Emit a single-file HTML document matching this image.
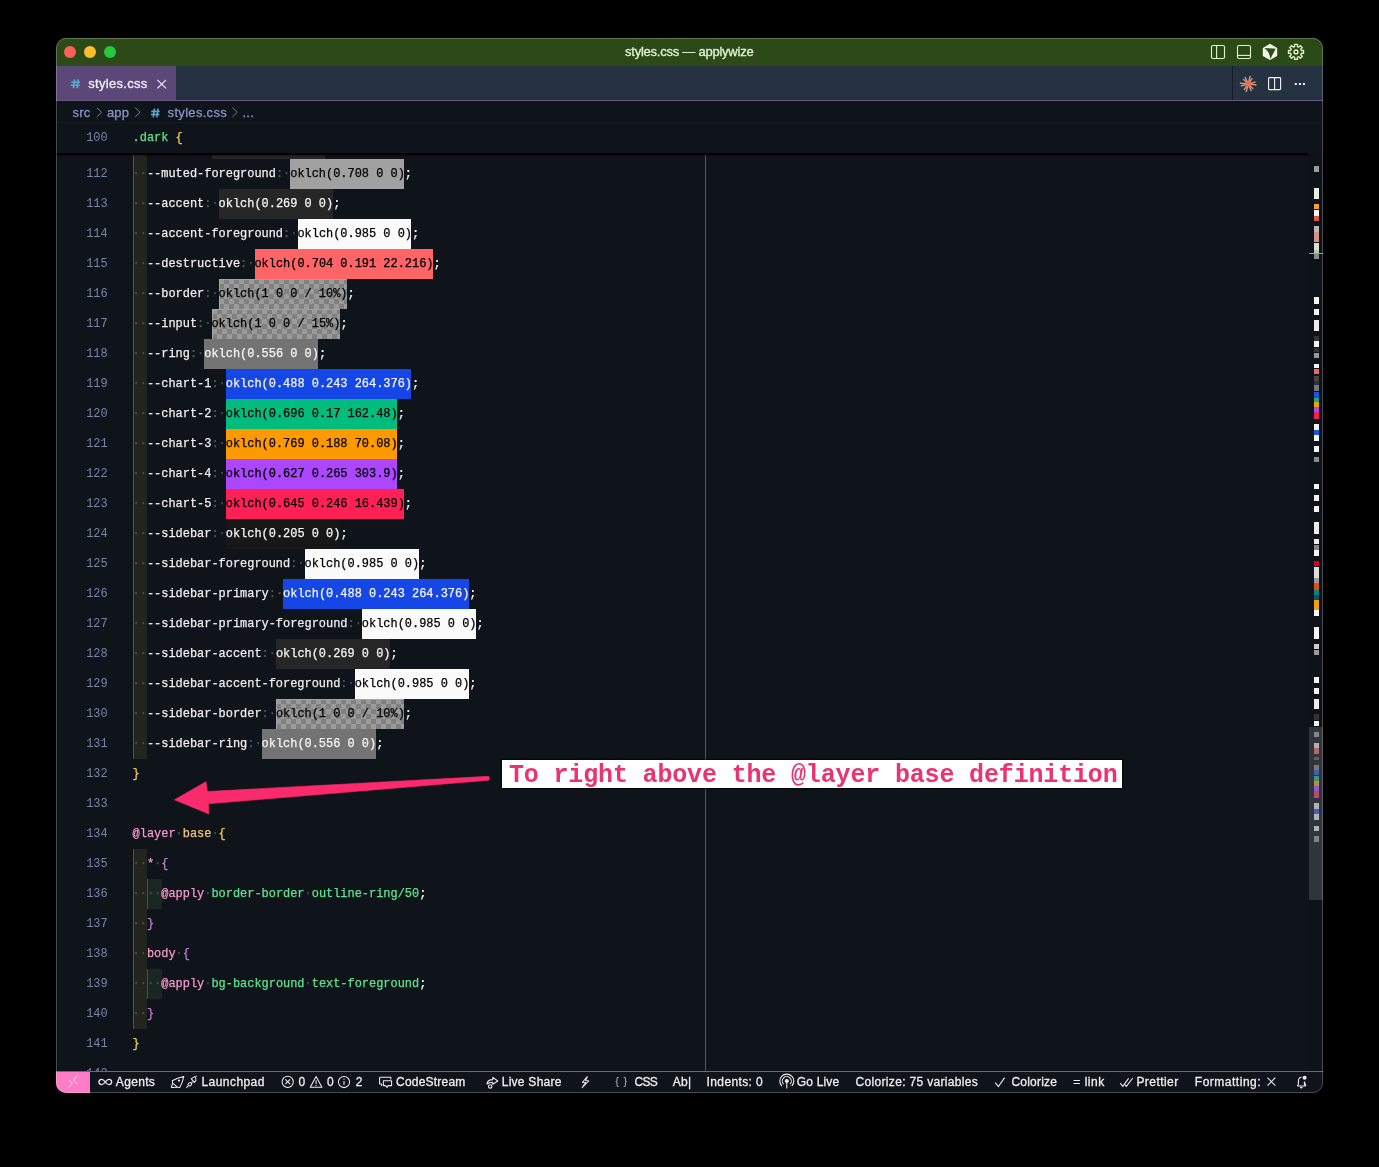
<!DOCTYPE html>
<html><head><meta charset="utf-8">
<style>
html,body{margin:0;padding:0;background:#000;width:1379px;height:1167px;overflow:hidden;position:relative}
#win,#ov,#anntext{will-change:transform}
*{box-sizing:border-box}
#win{position:absolute;left:56px;top:38px;width:1267px;height:1055px;border-radius:10px;overflow:hidden;background:#0f131a}
#frame{position:absolute;left:56px;top:38px;width:1267px;height:1055px;border-radius:10px;border:1px solid rgba(255,255,255,0.24);pointer-events:none}
#title{position:absolute;left:0;top:0;width:1267px;height:28px;background:#2c4a18;border-top:1px solid #2c4a18}
.tl{position:absolute;top:8px;width:12px;height:12px;border-radius:50%}
#tabs{position:absolute;left:0;top:28px;width:1267px;height:35px;background:#243242;border-bottom:1px solid #625880}
#tab{position:absolute;left:0;top:0;width:120px;height:34px;background:#5c4878}
#crumb{position:absolute;left:0;top:63px;width:1267px;height:21px;background:#0f131a}
#editor{position:absolute;left:0;top:84px;width:1267px;height:949px;background:#0f131a;overflow:hidden}
#status{position:absolute;left:0;top:1033px;width:1267px;height:22px;background:#0f131a;border-top:1px solid #5d6d8c}
#remote{position:absolute;left:0;top:0;width:34px;height:21px;background:#fc7cc6}
.ln{position:absolute;left:0;width:51.7px;text-align:right;font:11.943px "Liberation Mono",monospace;color:#7b82a8;height:30px;line-height:30px}
.code{position:absolute;left:76.6px;white-space:pre;font:11.943px "Liberation Mono",monospace;color:#e8e8e8;height:30px;line-height:30px;-webkit-text-stroke:0.25px currentColor}
.sw{position:absolute;height:30px}
.chk{background:repeating-conic-gradient(#808080 0 25%,#9a9a9a 0 50%) 0 0/10px 10px;box-shadow:inset 1px 1px 0 #a4a4a4}
.g1{position:absolute;width:14px;background:#20251e;border-left:1px solid #4e5550}
.g2{position:absolute;width:15px;background:#1a2622;border-left:1px solid #475246}
#sticky{position:absolute;left:0;top:0;width:1252px;height:31px;background:#0f131a;border-top:1px solid #161a20}
#sshadow{position:absolute;left:0;top:31px;width:1252px;height:4px;background:linear-gradient(#000 0,#000 35%,rgba(0,0,0,0.35) 60%,rgba(0,0,0,0))}
#ruler{position:absolute;left:649px;top:0;width:1px;height:949px;background:#545960}
#sbar{position:absolute;left:1252px;top:31px;width:15px;height:918px;background:#0f1319}
#slider{position:absolute;left:1253px;top:605px;width:14px;height:173px;background:rgba(120,125,130,0.32)}
.om{position:absolute;left:1258px;width:5px}
.uit{position:absolute;white-space:pre;font-family:"Liberation Sans",sans-serif;-webkit-text-stroke:0.3px currentColor}
#ov{position:absolute;left:0;top:0;width:1379px;height:1167px}
</style></head><body>
<div id="win">
  <div id="title">
    <div class="tl" style="left:8px;top:7px;background:#fe5f57"></div>
    <div class="tl" style="left:28px;top:7px;background:#febc2e"></div>
    <div class="tl" style="left:48px;top:7px;background:#28c840"></div>
  </div>
  <div id="tabs">
    <div id="tab"></div>
  </div>
  <div id="crumb"></div>
  <div id="editor">
    <div id="ein" style="position:absolute;left:0;top:-84px;width:1267px;height:1055px">
<div class="g1" style="left:77px;top:91px;height:630px"></div>
<div class="g1" style="left:77px;top:811px;height:180px"></div>
<div class="g2" style="left:91px;top:841px;height:30px"></div>
<div class="g2" style="left:91px;top:931px;height:30px"></div>
<div class="ln" style="top:91px">111</div>
<div class="sw" style="left:155.63px;top:91px;width:113.87px;background:#262626"></div>
<div class="code" style="top:91px"><span style="color:#4a5049">··</span><span style="color:#eeeeee">--muted</span><span style="color:#525862">:</span><span style="color:#4a5049">·</span><span style="color:#f4f4f4">oklch(0.269 0 0)</span><span style="color:#eeeeee">;</span></div>
<div class="ln" style="top:121px">112</div>
<div class="sw" style="left:234.47px;top:121px;width:113.87px;background:#a1a1a1"></div>
<div class="code" style="top:121px"><span style="color:#4a5049">··</span><span style="color:#eeeeee">--muted-foreground</span><span style="color:#525862">:</span><span style="color:#4a5049">·</span><span style="color:#000">oklch(0.708 0 0)</span><span style="color:#eeeeee">;</span></div>
<div class="ln" style="top:151px">113</div>
<div class="sw" style="left:162.80px;top:151px;width:113.87px;background:#262626"></div>
<div class="code" style="top:151px"><span style="color:#4a5049">··</span><span style="color:#eeeeee">--accent</span><span style="color:#525862">:</span><span style="color:#4a5049">·</span><span style="color:#f4f4f4">oklch(0.269 0 0)</span><span style="color:#eeeeee">;</span></div>
<div class="ln" style="top:181px">114</div>
<div class="sw" style="left:241.63px;top:181px;width:113.87px;background:#fafafa"></div>
<div class="code" style="top:181px"><span style="color:#4a5049">··</span><span style="color:#eeeeee">--accent-foreground</span><span style="color:#525862">:</span><span style="color:#4a5049">·</span><span style="color:#000">oklch(0.985 0 0)</span><span style="color:#eeeeee">;</span></div>
<div class="ln" style="top:211px">115</div>
<div class="sw" style="left:198.63px;top:211px;width:178.37px;background:#ff6467"></div>
<div class="code" style="top:211px"><span style="color:#4a5049">··</span><span style="color:#eeeeee">--destructive</span><span style="color:#525862">:</span><span style="color:#4a5049">·</span><span style="color:#000">oklch(0.704 0.191 22.216)</span><span style="color:#eeeeee">;</span></div>
<div class="ln" style="top:241px">116</div>
<div class="sw chk" style="left:162.80px;top:241px;width:128.20px"></div>
<div class="code" style="top:241px"><span style="color:#4a5049">··</span><span style="color:#eeeeee">--border</span><span style="color:#525862">:</span><span style="color:#4a5049">·</span><span style="color:#000">oklch(1 0 0 / 10%)</span><span style="color:#eeeeee">;</span></div>
<div class="ln" style="top:271px">117</div>
<div class="sw chk" style="left:155.63px;top:271px;width:128.20px"></div>
<div class="code" style="top:271px"><span style="color:#4a5049">··</span><span style="color:#eeeeee">--input</span><span style="color:#525862">:</span><span style="color:#4a5049">·</span><span style="color:#000">oklch(1 0 0 / 15%)</span><span style="color:#eeeeee">;</span></div>
<div class="ln" style="top:301px">118</div>
<div class="sw" style="left:148.47px;top:301px;width:113.87px;background:#737373"></div>
<div class="code" style="top:301px"><span style="color:#4a5049">··</span><span style="color:#eeeeee">--ring</span><span style="color:#525862">:</span><span style="color:#4a5049">·</span><span style="color:#f4f4f4">oklch(0.556 0 0)</span><span style="color:#eeeeee">;</span></div>
<div class="ln" style="top:331px">119</div>
<div class="sw" style="left:169.97px;top:331px;width:185.53px;background:#1447e6"></div>
<div class="code" style="top:331px"><span style="color:#4a5049">··</span><span style="color:#eeeeee">--chart-1</span><span style="color:#525862">:</span><span style="color:#4a5049">·</span><span style="color:#f4f4f4">oklch(0.488 0.243 264.376)</span><span style="color:#eeeeee">;</span></div>
<div class="ln" style="top:361px">120</div>
<div class="sw" style="left:169.97px;top:361px;width:171.20px;background:#00bc7d"></div>
<div class="code" style="top:361px"><span style="color:#4a5049">··</span><span style="color:#eeeeee">--chart-2</span><span style="color:#525862">:</span><span style="color:#4a5049">·</span><span style="color:#000">oklch(0.696 0.17 162.48)</span><span style="color:#eeeeee">;</span></div>
<div class="ln" style="top:391px">121</div>
<div class="sw" style="left:169.97px;top:391px;width:171.20px;background:#fe9a00"></div>
<div class="code" style="top:391px"><span style="color:#4a5049">··</span><span style="color:#eeeeee">--chart-3</span><span style="color:#525862">:</span><span style="color:#4a5049">·</span><span style="color:#000">oklch(0.769 0.188 70.08)</span><span style="color:#eeeeee">;</span></div>
<div class="ln" style="top:421px">122</div>
<div class="sw" style="left:169.97px;top:421px;width:171.20px;background:#ad46ff"></div>
<div class="code" style="top:421px"><span style="color:#4a5049">··</span><span style="color:#eeeeee">--chart-4</span><span style="color:#525862">:</span><span style="color:#4a5049">·</span><span style="color:#000">oklch(0.627 0.265 303.9)</span><span style="color:#eeeeee">;</span></div>
<div class="ln" style="top:451px">123</div>
<div class="sw" style="left:169.97px;top:451px;width:178.37px;background:#ff2056"></div>
<div class="code" style="top:451px"><span style="color:#4a5049">··</span><span style="color:#eeeeee">--chart-5</span><span style="color:#525862">:</span><span style="color:#4a5049">·</span><span style="color:#000">oklch(0.645 0.246 16.439)</span><span style="color:#eeeeee">;</span></div>
<div class="ln" style="top:481px">124</div>
<div class="sw" style="left:169.97px;top:481px;width:113.87px;background:#171717"></div>
<div class="code" style="top:481px"><span style="color:#4a5049">··</span><span style="color:#eeeeee">--sidebar</span><span style="color:#525862">:</span><span style="color:#4a5049">·</span><span style="color:#f4f4f4">oklch(0.205 0 0)</span><span style="color:#eeeeee">;</span></div>
<div class="ln" style="top:511px">125</div>
<div class="sw" style="left:248.80px;top:511px;width:113.87px;background:#fafafa"></div>
<div class="code" style="top:511px"><span style="color:#4a5049">··</span><span style="color:#eeeeee">--sidebar-foreground</span><span style="color:#525862">:</span><span style="color:#4a5049">·</span><span style="color:#000">oklch(0.985 0 0)</span><span style="color:#eeeeee">;</span></div>
<div class="ln" style="top:541px">126</div>
<div class="sw" style="left:227.30px;top:541px;width:185.53px;background:#1447e6"></div>
<div class="code" style="top:541px"><span style="color:#4a5049">··</span><span style="color:#eeeeee">--sidebar-primary</span><span style="color:#525862">:</span><span style="color:#4a5049">·</span><span style="color:#f4f4f4">oklch(0.488 0.243 264.376)</span><span style="color:#eeeeee">;</span></div>
<div class="ln" style="top:571px">127</div>
<div class="sw" style="left:306.13px;top:571px;width:113.87px;background:#fafafa"></div>
<div class="code" style="top:571px"><span style="color:#4a5049">··</span><span style="color:#eeeeee">--sidebar-primary-foreground</span><span style="color:#525862">:</span><span style="color:#4a5049">·</span><span style="color:#000">oklch(0.985 0 0)</span><span style="color:#eeeeee">;</span></div>
<div class="ln" style="top:601px">128</div>
<div class="sw" style="left:220.13px;top:601px;width:113.87px;background:#262626"></div>
<div class="code" style="top:601px"><span style="color:#4a5049">··</span><span style="color:#eeeeee">--sidebar-accent</span><span style="color:#525862">:</span><span style="color:#4a5049">·</span><span style="color:#f4f4f4">oklch(0.269 0 0)</span><span style="color:#eeeeee">;</span></div>
<div class="ln" style="top:631px">129</div>
<div class="sw" style="left:298.97px;top:631px;width:113.87px;background:#fafafa"></div>
<div class="code" style="top:631px"><span style="color:#4a5049">··</span><span style="color:#eeeeee">--sidebar-accent-foreground</span><span style="color:#525862">:</span><span style="color:#4a5049">·</span><span style="color:#000">oklch(0.985 0 0)</span><span style="color:#eeeeee">;</span></div>
<div class="ln" style="top:661px">130</div>
<div class="sw chk" style="left:220.13px;top:661px;width:128.20px"></div>
<div class="code" style="top:661px"><span style="color:#4a5049">··</span><span style="color:#eeeeee">--sidebar-border</span><span style="color:#525862">:</span><span style="color:#4a5049">·</span><span style="color:#000">oklch(1 0 0 / 10%)</span><span style="color:#eeeeee">;</span></div>
<div class="ln" style="top:691px">131</div>
<div class="sw" style="left:205.80px;top:691px;width:113.87px;background:#737373"></div>
<div class="code" style="top:691px"><span style="color:#4a5049">··</span><span style="color:#eeeeee">--sidebar-ring</span><span style="color:#525862">:</span><span style="color:#4a5049">·</span><span style="color:#f4f4f4">oklch(0.556 0 0)</span><span style="color:#eeeeee">;</span></div>
<div class="ln" style="top:721px">132</div>
<div class="code" style="top:721px"><span style="color:#f7cd46">}</span></div>
<div class="ln" style="top:751px">133</div>
<div class="code" style="top:751px"></div>
<div class="ln" style="top:781px">134</div>
<div class="code" style="top:781px"><span style="color:#f49ac9">@layer</span><span style="color:#4a5049">·</span><span style="color:#f5c27a">base</span><span style="color:#4a5049">·</span><span style="color:#f7cd46">{</span></div>
<div class="ln" style="top:811px">135</div>
<div class="code" style="top:811px"><span style="color:#4a5049">··</span><span style="color:#f49ac9">*</span><span style="color:#4a5049">·</span><span style="color:#c77dd8">{</span></div>
<div class="ln" style="top:841px">136</div>
<div class="code" style="top:841px"><span style="color:#4a5049">····</span><span style="color:#f49ac9">@apply</span><span style="color:#4a5049">·</span><span style="color:#5ee38f">border-border</span><span style="color:#4a5049">·</span><span style="color:#5ee38f">outline-ring/50</span><span style="color:#eeeeee">;</span></div>
<div class="ln" style="top:871px">137</div>
<div class="code" style="top:871px"><span style="color:#4a5049">··</span><span style="color:#c77dd8">}</span></div>
<div class="ln" style="top:901px">138</div>
<div class="code" style="top:901px"><span style="color:#4a5049">··</span><span style="color:#f49ac9">body</span><span style="color:#4a5049">·</span><span style="color:#c77dd8">{</span></div>
<div class="ln" style="top:931px">139</div>
<div class="code" style="top:931px"><span style="color:#4a5049">····</span><span style="color:#f49ac9">@apply</span><span style="color:#4a5049">·</span><span style="color:#5ee38f">bg-background</span><span style="color:#4a5049">·</span><span style="color:#5ee38f">text-foreground</span><span style="color:#eeeeee">;</span></div>
<div class="ln" style="top:961px">140</div>
<div class="code" style="top:961px"><span style="color:#4a5049">··</span><span style="color:#c77dd8">}</span></div>
<div class="ln" style="top:991px">141</div>
<div class="code" style="top:991px"><span style="color:#f7cd46">}</span></div>
<div class="ln" style="top:1021px">142</div>
<div class="code" style="top:1021px"></div>
    </div>
    <div id="ruler"></div>
<div id="sticky"><div class="ln" style="top:0px">100</div><div class="code" style="top:0px"><span style="color:#5ee38f">.dark</span><span> </span><span style="color:#f7cd46">{</span></div></div>
<div id="sshadow"></div>
<div style="position:absolute;left:1252px;top:0;width:15px;height:1px;background:#161a20"></div>
    <div id="sbar"></div>
<div class="om" style="top:44.3px;height:5.5px;background:#9a9a9a"></div><div class="om" style="top:65.9px;height:10.8px;background:#e6eedf"></div><div class="om" style="top:81.9px;height:5.6px;background:#f5a030"></div><div class="om" style="top:87.5px;height:6.1px;background:#f4f4f4"></div><div class="om" style="top:94.2px;height:4.7px;background:#e05a45"></div><div class="om" style="top:103.8px;height:5.9px;background:#b8b8b8"></div><div class="om" style="top:109.7px;height:10.2px;background:#d49482"></div><div class="om" style="top:120.5px;height:7.1px;background:#dcdcdc"></div><div class="om" style="top:127.6px;height:4.6px;background:#a8d0a8"></div><div class="om" style="top:132.2px;height:5.2px;background:#8a8a8a"></div><div class="om" style="top:175.4px;height:6.8px;background:#f4f4f4"></div><div class="om" style="top:186.8px;height:6.2px;background:#f4f4f4"></div><div class="om" style="top:198.0px;height:11.3px;background:#ececec"></div><div class="om" style="top:214.0px;height:4.6px;background:#333"></div><div class="om" style="top:219.2px;height:5.5px;background:#f4f4f4"></div><div class="om" style="top:226.3px;height:3.7px;background:#333"></div><div class="om" style="top:230.9px;height:5.2px;background:#999"></div><div class="om" style="top:241.7px;height:4.6px;background:#f4f4f4"></div><div class="om" style="top:247.3px;height:5.2px;background:#f06464"></div><div class="om" style="top:254.0px;height:4.7px;background:#444"></div><div class="om" style="top:258.7px;height:4.6px;background:#333"></div><div class="om" style="top:263.3px;height:5.5px;background:#777"></div><div class="om" style="top:269.5px;height:6.1px;background:#2050e0"></div><div class="om" style="top:275.6px;height:4.7px;background:#10b080"></div><div class="om" style="top:280.3px;height:4.6px;background:#f0a000"></div><div class="om" style="top:284.9px;height:5.5px;background:#a050f0"></div><div class="om" style="top:290.4px;height:6.2px;background:#f02050"></div><div class="om" style="top:301.9px;height:6.1px;background:#f4f4f4"></div><div class="om" style="top:308.0px;height:4.6px;background:#2050e0"></div><div class="om" style="top:312.6px;height:6.2px;background:#f4f4f4"></div><div class="om" style="top:324.4px;height:5.2px;background:#f4f4f4"></div><div class="om" style="top:334.9px;height:5.5px;background:#888"></div><div class="om" style="top:361.9px;height:5.5px;background:#f4f4f4"></div><div class="om" style="top:373.3px;height:5.5px;background:#f4f4f4"></div><div class="om" style="top:384.0px;height:5.6px;background:#f4f4f4"></div><div class="om" style="top:400.4px;height:11.8px;background:#ececec"></div><div class="om" style="top:416.5px;height:5.5px;background:#ececec"></div><div class="om" style="top:423.0px;height:4.6px;background:#888"></div><div class="om" style="top:427.6px;height:6.2px;background:#f4f4f4"></div><div class="om" style="top:439.0px;height:5.2px;background:#e00010"></div><div class="om" style="top:445.2px;height:10.8px;background:#dddddd"></div><div class="om" style="top:456.0px;height:4.6px;background:#999"></div><div class="om" style="top:460.6px;height:7.1px;background:#e05010"></div><div class="om" style="top:467.7px;height:5.2px;background:#108080"></div><div class="om" style="top:472.9px;height:4.7px;background:#105070"></div><div class="om" style="top:477.6px;height:10.8px;background:#f0a010"></div><div class="om" style="top:488.4px;height:6.1px;background:#f4f4f4"></div><div class="om" style="top:504.7px;height:12.3px;background:#f4f4f4"></div><div class="om" style="top:521.7px;height:5.2px;background:#cccccc"></div><div class="om" style="top:527.5px;height:5.5px;background:#999"></div><div class="om" style="top:554.7px;height:6.2px;background:#f4f4f4"></div><div class="om" style="top:566.1px;height:6.2px;background:#f4f4f4"></div><div class="om" style="top:576.9px;height:10.2px;background:#ececec"></div><div class="om" style="top:591.7px;height:6.2px;background:#333"></div><div class="om" style="top:598.8px;height:5.2px;background:#f4f4f4"></div><div class="om" style="top:610.0px;height:5.0px;background:#8a8a8a"></div><div class="om" style="top:621.0px;height:5.0px;background:#cccccc"></div><div class="om" style="top:626.0px;height:6.2px;background:#d06060"></div><div class="om" style="top:634.7px;height:3.3px;background:#555"></div><div class="om" style="top:642.5px;height:5.2px;background:#777"></div><div class="om" style="top:648.4px;height:5.1px;background:#3050d0"></div><div class="om" style="top:653.5px;height:5.2px;background:#20a070"></div><div class="om" style="top:658.7px;height:5.1px;background:#e09020"></div><div class="om" style="top:663.8px;height:5.2px;background:#9050e0"></div><div class="om" style="top:669.0px;height:6.9px;background:#e03060"></div><div class="om" style="top:681.0px;height:6.2px;background:#cccccc"></div><div class="om" style="top:687.2px;height:5.1px;background:#3050d0"></div><div class="om" style="top:692.3px;height:5.9px;background:#cccccc"></div><div class="om" style="top:704.4px;height:4.8px;background:#cccccc"></div><div class="om" style="top:714.3px;height:5.5px;background:#888"></div><div style="position:absolute;left:1253px;top:131px;width:14px;height:1px;background:#5fb3c4"></div>
    <div id="slider"></div>
  </div>
  <div id="status"><div id="remote"></div></div>
</div>
<div id="frame"></div>
<div id="ov">
<span class="uit" style="left:625.00px;top:45.00px;font-size:13px;line-height:13px;letter-spacing:-0.238px;color:#e3f2d6">styles.css — applywize</span>
<span class="uit" style="left:88.30px;top:77.30px;font-size:13px;line-height:13px;letter-spacing:0.300px;color:#f4eefa">styles.css</span>
<span class="uit" style="left:72.60px;top:106.00px;font-size:13px;line-height:13px;letter-spacing:0.200px;color:#8b91c0">src</span>
<span class="uit" style="left:107.00px;top:106.00px;font-size:13px;line-height:13px;letter-spacing:0.100px;color:#8b91c0">app</span>
<span class="uit" style="left:167.60px;top:106.00px;font-size:13px;line-height:13px;letter-spacing:0.311px;color:#8b91c0">styles.css</span>
<span class="uit" style="left:242.50px;top:106.00px;font-size:13px;line-height:13px;letter-spacing:0.250px;color:#8b91c0">...</span>
<span class="uit" style="left:115.80px;top:1076.04px;font-size:12px;line-height:12px;letter-spacing:0.340px;color:#ededed">Agents</span>
<span class="uit" style="left:201.50px;top:1076.04px;font-size:12px;line-height:12px;letter-spacing:0.438px;color:#ededed">Launchpad</span>
<span class="uit" style="left:298.60px;top:1076.04px;font-size:12px;line-height:12px;letter-spacing:0.000px;color:#ededed">0</span>
<span class="uit" style="left:326.90px;top:1076.04px;font-size:12px;line-height:12px;letter-spacing:0.000px;color:#ededed">0</span>
<span class="uit" style="left:355.70px;top:1076.04px;font-size:12px;line-height:12px;letter-spacing:0.000px;color:#ededed">2</span>
<span class="uit" style="left:396.00px;top:1076.04px;font-size:12px;line-height:12px;letter-spacing:0.222px;color:#ededed">CodeStream</span>
<span class="uit" style="left:501.70px;top:1076.04px;font-size:12px;line-height:12px;letter-spacing:0.267px;color:#ededed">Live Share</span>
<span class="uit" style="left:634.50px;top:1076.04px;font-size:12px;line-height:12px;letter-spacing:-0.750px;color:#ededed">CSS</span>
<span class="uit" style="left:672.70px;top:1076.04px;font-size:12px;line-height:12px;letter-spacing:0.300px;color:#ededed">Ab|</span>
<span class="uit" style="left:706.60px;top:1076.04px;font-size:12px;line-height:12px;letter-spacing:0.378px;color:#ededed">Indents: 0</span>
<span class="uit" style="left:796.80px;top:1076.04px;font-size:12px;line-height:12px;letter-spacing:0.167px;color:#ededed">Go Live</span>
<span class="uit" style="left:855.50px;top:1076.04px;font-size:12px;line-height:12px;letter-spacing:0.329px;color:#ededed">Colorize: 75 variables</span>
<span class="uit" style="left:1011.40px;top:1076.04px;font-size:12px;line-height:12px;letter-spacing:0.229px;color:#ededed">Colorize</span>
<span class="uit" style="left:1073.30px;top:1076.04px;font-size:12px;line-height:12px;letter-spacing:0.500px;color:#ededed">= link</span>
<span class="uit" style="left:1136.40px;top:1076.04px;font-size:12px;line-height:12px;letter-spacing:0.443px;color:#ededed">Prettier</span>
<span class="uit" style="left:1194.80px;top:1076.04px;font-size:12px;line-height:12px;letter-spacing:0.510px;color:#ededed">Formatting:</span>
<svg width="1379" height="1167" style="position:absolute;left:0;top:0"><rect x="1211.5" y="45.5" width="13" height="13" rx="1.5" fill="none" stroke="#e2f5c6" stroke-width="1.1"/><line x1="1216.6" y1="45.5" x2="1216.6" y2="58.5" stroke="#e2f5c6" stroke-width="1.1"/><rect x="1237.5" y="45.5" width="13" height="13" rx="1.5" fill="none" stroke="#e2f5c6" stroke-width="1.1"/><line x1="1237.5" y1="55.4" x2="1250.5" y2="55.4" stroke="#e2f5c6" stroke-width="1.1"/><polygon points="1270,43.8 1277.2,47.9 1277.2,56 1270,60.1 1262.8,56 1262.8,47.9" fill="#f1f8ea"/><path d="M1264.3,47.9 L1275.7,48.7 L1270.3,58.9 Q1269.6,51.6 1264.3,47.9 Z" fill="#2c4a18"/><path d="M1301.34,50.57 L1303.55,50.40 L1303.55,53.40 L1301.34,53.23 L1300.71,54.74 L1302.40,56.18 L1300.28,58.30 L1298.84,56.61 L1297.33,57.24 L1297.50,59.45 L1294.50,59.45 L1294.67,57.24 L1293.16,56.61 L1291.72,58.30 L1289.60,56.18 L1291.29,54.74 L1290.66,53.23 L1288.45,53.40 L1288.45,50.40 L1290.66,50.57 L1291.29,49.06 L1289.60,47.62 L1291.72,45.50 L1293.16,47.19 L1294.67,46.56 L1294.50,44.35 L1297.50,44.35 L1297.33,46.56 L1298.84,47.19 L1300.28,45.50 L1302.40,47.62 L1300.71,49.06Z" fill="none" stroke="#e2f5c6" stroke-width="1.3" stroke-linejoin="round"/><circle cx="1296" cy="51.9" r="1.9" fill="none" stroke="#e2f5c6" stroke-width="1.4"/><line x1="1232.5" y1="66" x2="1232.5" y2="100" stroke="#151c26" stroke-width="1"/><line x1="1248.20" y1="84.00" x2="1256.00" y2="84.78" stroke="#e8a590" stroke-width="1.25" stroke-linecap="round"/><line x1="1248.20" y1="84.00" x2="1252.89" y2="88.58" stroke="#e8a590" stroke-width="1.25" stroke-linecap="round"/><line x1="1248.20" y1="84.00" x2="1251.16" y2="90.56" stroke="#e8a590" stroke-width="1.25" stroke-linecap="round"/><line x1="1248.20" y1="84.00" x2="1246.26" y2="91.60" stroke="#e8a590" stroke-width="1.25" stroke-linecap="round"/><line x1="1248.20" y1="84.00" x2="1244.37" y2="89.33" stroke="#e8a590" stroke-width="1.25" stroke-linecap="round"/><line x1="1248.20" y1="84.00" x2="1241.27" y2="85.95" stroke="#e8a590" stroke-width="1.25" stroke-linecap="round"/><line x1="1248.20" y1="84.00" x2="1240.40" y2="83.22" stroke="#e8a590" stroke-width="1.25" stroke-linecap="round"/><line x1="1248.20" y1="84.00" x2="1243.51" y2="79.42" stroke="#e8a590" stroke-width="1.25" stroke-linecap="round"/><line x1="1248.20" y1="84.00" x2="1245.24" y2="77.44" stroke="#e8a590" stroke-width="1.25" stroke-linecap="round"/><line x1="1248.20" y1="84.00" x2="1250.14" y2="76.40" stroke="#e8a590" stroke-width="1.25" stroke-linecap="round"/><line x1="1248.20" y1="84.00" x2="1252.03" y2="78.67" stroke="#e8a590" stroke-width="1.25" stroke-linecap="round"/><line x1="1248.20" y1="84.00" x2="1255.13" y2="82.05" stroke="#e8a590" stroke-width="1.25" stroke-linecap="round"/><circle cx="1248.2" cy="84" r="3.2" fill="#e2714f"/><rect x="1268.6" y="77.6" width="12" height="12" rx="0.9" fill="none" stroke="#f4f4f4" stroke-width="1.1"/><line x1="1274.6" y1="77.6" x2="1274.6" y2="89.6" stroke="#f4f4f4" stroke-width="1.1"/><rect x="1294.8" y="83" width="2" height="2" fill="#f4f4f4"/><rect x="1298.9" y="83" width="2" height="2" fill="#f4f4f4"/><rect x="1302.9" y="83" width="2" height="2" fill="#f4f4f4"/><g stroke="#5aa7cc" stroke-width="1.7" stroke-linecap="butt"><line x1="74.606" y1="79.3" x2="73.475" y2="88.1"/><line x1="78.25999999999999" y1="79.3" x2="77.12899999999999" y2="88.1"/><line x1="71.3" y1="82.204" x2="80.0" y2="82.204"/><line x1="71.0" y1="85.28399999999999" x2="79.7" y2="85.28399999999999"/></g><g stroke="#f4eefa" stroke-width="1.1"><line x1="157.4" y1="79.8" x2="166" y2="88.3"/><line x1="166" y1="79.8" x2="157.4" y2="88.3"/></g><polyline points="96.8,107.6 101.6,112.3 96.8,117" fill="none" stroke="#7d8290" stroke-width="1"/><polyline points="135.2,107.6 140.0,112.3 135.2,117" fill="none" stroke="#7d8290" stroke-width="1"/><polyline points="232.4,107.6 237.20000000000002,112.3 232.4,117" fill="none" stroke="#7d8290" stroke-width="1"/><g stroke="#5aa7cc" stroke-width="1.6" stroke-linecap="butt"><line x1="154.42999999999998" y1="108.5" x2="153.325" y2="117.3"/><line x1="158.0" y1="108.5" x2="156.89499999999998" y2="117.3"/><line x1="151.2" y1="111.404" x2="159.7" y2="111.404"/><line x1="150.89999999999998" y1="114.484" x2="159.39999999999998" y2="114.484"/></g><g stroke="#fde6f4" stroke-width="1" fill="none" stroke-linecap="round"><polyline points="69.1,1080.3 72.4,1083.4 69.1,1087"/><polyline points="77,1076.1 73.4,1080 76.9,1083.8"/></g><path d="M105.3,1082 C103.6,1079.6 101.9,1078.7 100.6,1078.9 C98.8,1079.2 97.9,1080.6 97.9,1082 C97.9,1083.4 98.8,1084.8 100.6,1085.1 C101.9,1085.3 103.6,1084.4 105.3,1082 C107,1079.6 108.7,1078.7 110,1078.9 C111.8,1079.2 112.7,1080.6 112.7,1082 C112.7,1083.4 111.8,1084.8 110,1085.1 C108.7,1085.3 107,1084.4 105.3,1082 Z" fill="none" stroke="#ededed" stroke-width="1.5" transform="translate(105.3,1082) scale(0.86,0.84) translate(-105.3,-1082)"/><g fill="none" stroke="#ededed" stroke-width="1.05" stroke-linejoin="round"><path d="M183.8,1076.4 L177.6,1078.2 L172.3,1080.8 L172.6,1083.2 L177.4,1087.2 L179.8,1087.4 L182.4,1081.6 Z"/><path d="M172.6,1083.2 L171.4,1087.4 L177.4,1087.2"/></g><circle cx="179.0" cy="1080.6" r="1.1" fill="#ededed"/><g fill="none" stroke="#ededed" stroke-width="1.05" stroke-linejoin="round"><path d="M191.2,1078.6 L194.8,1076.6 Q196.6,1078.2 195.9,1080.6 L194.2,1082.4 Z"/><path d="M195.6,1076.4 L196.8,1075.9"/><path d="M190.6,1082.4 Q188.4,1082.6 187.9,1084.6 Q188.2,1086.2 189.8,1086.0 Q191.6,1085.4 191.8,1083.6 Z"/><path d="M188.0,1086.0 L186.3,1087.8"/><path d="M191.6,1082.6 L192.6,1081.6"/></g><g fill="none" stroke="#ededed" stroke-width="1.05"><circle cx="287.7" cy="1081.8" r="5.6"/><line x1="285.3" y1="1079.4" x2="290.1" y2="1084.2"/><line x1="290.1" y1="1079.4" x2="285.3" y2="1084.2"/></g><g fill="none" stroke="#ededed" stroke-width="1.05" stroke-linejoin="round"><path d="M316.1,1076.4 L321.9,1087.2 L310.3,1087.2 Z"/><line x1="316.1" y1="1080.2" x2="316.1" y2="1084"/><line x1="316.1" y1="1085" x2="316.1" y2="1086"/></g><g fill="none" stroke="#ededed" stroke-width="1.05"><circle cx="344" cy="1082" r="5.6"/><line x1="344" y1="1081" x2="344" y2="1085"/><line x1="344" y1="1078.6" x2="344" y2="1079.8"/></g><g fill="none" stroke="#ededed" stroke-width="1.05" stroke-linejoin="round"><path d="M379.6,1077.2 L390.8,1077.2 L390.8,1079.6 M379.6,1077.2 L379.6,1084 L381.6,1084 L381.6,1086"/><path d="M383.4,1080.8 L391.6,1080.8 L391.6,1085.6 L388.4,1085.6 L387,1087.4 L385.8,1085.6 L383.4,1085.6 Z"/></g><g fill="none" stroke="#ededed" stroke-width="1.1" stroke-linejoin="round"><path d="M487,1084 Q487.4,1079.6 492.8,1079.6 L492.8,1077.4 L497.8,1081 L492.8,1084.4 L492.8,1082.2 Q489.2,1082.2 487,1084 Z"/><circle cx="490.2" cy="1086.4" r="1.7"/></g><path d="M587.4,1076.4 L582.4,1082.4 L585.6,1082.4 L582.2,1087.6 L588.8,1080.8 L585.6,1080.8 L587.6,1076.4" fill="none" stroke="#d6d6d6" stroke-width="1.05" stroke-linejoin="round"/><text x="615.2" y="1085.4" font-family="Liberation Sans" font-size="11" fill="#b8b8b8">{</text><text x="623.6" y="1085.4" font-family="Liberation Sans" font-size="11" fill="#b8b8b8">}</text><g fill="none" stroke="#ededed" stroke-width="1.1"><circle cx="786.8" cy="1081" r="1.5" fill="#ededed"/><path d="M783.6,1084.2 A4.5,4.5 0 1 1 790,1084.2"/><path d="M781.8,1086 A7,7 0 1 1 791.8,1086"/><line x1="786.8" y1="1082.4" x2="786.8" y2="1088.4"/></g><polyline points="995.2,1082.6 998.4,1086.6 1004.6,1077.6" fill="none" stroke="#ededed" stroke-width="1.1"/><g fill="none" stroke="#ededed" stroke-width="1.05"><polyline points="1120.2,1083.2 1122.8,1086.4 1128.6,1078.4"/><polyline points="1124.6,1084.4 1126.4,1086.4 1132.8,1078"/></g><g stroke="#ededed" stroke-width="1.05"><line x1="1267.5" y1="1077.6" x2="1275.3" y2="1085.6"/><line x1="1275.3" y1="1077.6" x2="1267.5" y2="1085.6"/></g><g fill="none" stroke="#ededed" stroke-width="1.1"><path d="M1297.2,1086 L1298.4,1084.4 L1298.4,1080.8 Q1298.6,1077.4 1301.6,1077.2 M1304.4,1081.6 L1304.4,1084.4 L1305.8,1086 Z M1297.2,1086 L1305.8,1086"/><path d="M1300.2,1087.2 Q1301.3,1088.6 1302.4,1087.2"/></g><circle cx="1304.6" cy="1077.8" r="2" fill="#ededed"/><path d="M174.4,799.8 L206,781.7 L207.4,791.5 L488.5,776.3 Q490.6,778.3 488.5,780.3 L208.5,803.8 L208.9,814 Z" fill="#fb2a6c" stroke="#fb2a6c" stroke-width="0.6" stroke-linejoin="round"/></svg>
</div>
<div id="annbox" style="position:absolute;left:502px;top:759.5px;width:620px;height:28.5px;background:#fff;box-shadow:0 0 1.5px 1px rgba(0,0,0,0.8)"></div><div id="anntext" style="position:absolute;left:509px;top:761px;letter-spacing:-0.16px;font:bold 25px/30px 'Liberation Mono',monospace;color:#ea3370;white-space:pre">To right above the @layer base definition</div>
</body></html>
